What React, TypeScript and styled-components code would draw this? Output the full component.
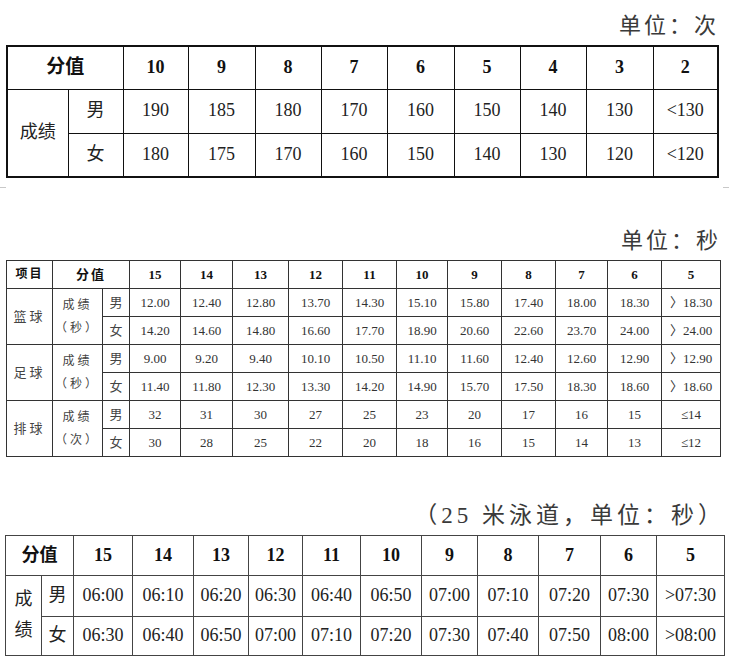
import React from 'react'
import styled, { createGlobalStyle } from 'styled-components';

const GlobalStyle = createGlobalStyle`
  html, body {
    margin: 0;
    padding: 0;
    background: #fff;
  }
  body {
    font-family: "Liberation Serif", "Noto Sans CJK SC", serif;
    color: #222;
  }
`;

// column widths measured from the scan
const jumpCols = [61, 55, 65, 67, 66, 66, 67, 66, 66, 67, 65];
const ballCols = [46, 50, 27, 51, 52, 56, 54, 54, 51, 54, 54, 52, 54, 59];
const swimCols = [36, 32, 59, 61, 55, 54, 58, 61, 56, 61, 62, 56, 68];

const jump = {
  scores: ['10', '9', '8', '7', '6', '5', '4', '3', '2'],
  male: ['190', '185', '180', '170', '160', '150', '140', '130', '<130'],
  female: ['180', '175', '170', '160', '150', '140', '130', '120', '<120'],
};

const ballScores = ['15', '14', '13', '12', '11', '10', '9', '8', '7', '6', '5'];
const balls = [
  {
    name: '篮球',
    unit: '（秒）',
    male: ['12.00', '12.40', '12.80', '13.70', '14.30', '15.10', '15.80', '17.40', '18.00', '18.30', '〉18.30'],
    female: ['14.20', '14.60', '14.80', '16.60', '17.70', '18.90', '20.60', '22.60', '23.70', '24.00', '〉24.00'],
  },
  {
    name: '足球',
    unit: '（秒）',
    male: ['9.00', '9.20', '9.40', '10.10', '10.50', '11.10', '11.60', '12.40', '12.60', '12.90', '〉12.90'],
    female: ['11.40', '11.80', '12.30', '13.30', '14.20', '14.90', '15.70', '17.50', '18.30', '18.60', '〉18.60'],
  },
  {
    name: '排球',
    unit: '（次）',
    male: ['32', '31', '30', '27', '25', '23', '20', '17', '16', '15', '≤14'],
    female: ['30', '28', '25', '22', '20', '18', '16', '15', '14', '13', '≤12'],
  },
];

const swim = {
  scores: ['15', '14', '13', '12', '11', '10', '9', '8', '7', '6', '5'],
  male: ['06:00', '06:10', '06:20', '06:30', '06:40', '06:50', '07:00', '07:10', '07:20', '07:30', '>07:30'],
  female: ['06:30', '06:40', '06:50', '07:00', '07:10', '07:20', '07:30', '07:40', '07:50', '08:00', '>08:00'],
};

const sum = (a: number[]) => a.reduce((s, v) => s + v, 0);

const App: React.FC = () => {
  return (
    <>
      <GlobalStyle />
      <Page>
        <Block $ml={6} $mt={11}>
          <Unit $spacing={3}>单位：次</Unit>
          <Table $w={sum(jumpCols)} $line="#111" $outer="2px solid #111">
            <colgroup>
              {jumpCols.map((w, i) => <Col key={i} $w={w} />)}
            </colgroup>
            <tbody>
              <Row $h={43}>
                <Head colSpan={2} $size={19}>分值</Head>
                {jump.scores.map(s => <Head key={s} $size={18}>{s}</Head>)}
              </Row>
              <Row $h={44}>
                <Label rowSpan={2} $size={18}>成绩</Label>
                <Label $size={18}>男</Label>
                {jump.male.map((v, i) => <Cell key={i} $size={18}>{v}</Cell>)}
              </Row>
              <Row $h={44}>
                <Label $size={18}>女</Label>
                {jump.female.map((v, i) => <Cell key={i} $size={18}>{v}</Cell>)}
              </Row>
            </tbody>
          </Table>
        </Block>

        <Divider>
          <Tick />
          <Tick />
        </Divider>

        <Block $ml={6} $mt={38}>
          <Unit $spacing={3}>单位：秒</Unit>
          <Table $w={sum(ballCols)} $line="#333" $outer="1px solid #555">
            <colgroup>
              {ballCols.map((w, i) => <Col key={i} $w={w} />)}
            </colgroup>
            <tbody>
              <Row $h={28}>
                <Head $size={12} $spread>项目</Head>
                <Head colSpan={2} $size={13} $spread>分值</Head>
                {ballScores.map(s => <Head key={s} $size={13}>{s}</Head>)}
              </Row>
              {balls.map(b => (
                <React.Fragment key={b.name}>
                  <Row $h={28}>
                    <Label rowSpan={2} $size={13} $spread $tone="#444">{b.name}</Label>
                    <Label rowSpan={2} $size={12} $spread $tone="#444">
                      <Stack $gap={9}>
                        <span>成绩</span>
                        <span>{b.unit}</span>
                      </Stack>
                    </Label>
                    <Label $size={13} $tone="#444">男</Label>
                    {b.male.map((v, i) => <Cell key={i} $size={13} $tone="#333">{v}</Cell>)}
                  </Row>
                  <Row $h={28}>
                    <Label $size={13} $tone="#444">女</Label>
                    {b.female.map((v, i) => <Cell key={i} $size={13} $tone="#333">{v}</Cell>)}
                  </Row>
                </React.Fragment>
              ))}
            </tbody>
          </Table>
        </Block>

        <Block $ml={5} $mt={44}>
          <Unit $spacing={4} $size={23}>（25 米泳道，单位：秒）</Unit>
          <Table $w={sum(swimCols)} $line="#444" $outer="1px solid #888">
            <colgroup>
              {swimCols.map((w, i) => <Col key={i} $w={w} />)}
            </colgroup>
            <tbody>
              <Row $h={40}>
                <Head colSpan={2} $size={18}>分值</Head>
                {swim.scores.map(s => <Head key={s} $size={18}>{s}</Head>)}
              </Row>
              <Row $h={41}>
                <Label rowSpan={2} $size={18}>
                  <Stack $gap={9}>
                    <span>成</span>
                    <span>绩</span>
                  </Stack>
                </Label>
                <Label $size={18}>男</Label>
                {swim.male.map((v, i) => <Cell key={i} $size={18}>{v}</Cell>)}
              </Row>
              <Row $h={39}>
                <Label $size={18}>女</Label>
                {swim.female.map((v, i) => <Cell key={i} $size={18}>{v}</Cell>)}
              </Row>
            </tbody>
          </Table>
        </Block>
      </Page>
    </>
  );
};

export default App

const Page = styled.main`
  width: 729px;
  min-height: 664px;
  display: flex;
  flex-direction: column;
  align-items: flex-start;
`;

const Block = styled.section<{ $ml: number; $mt: number }>`
  display: flex;
  flex-direction: column;
  gap: 4px;
  margin-left: ${p => p.$ml}px;
  margin-top: ${p => p.$mt}px;
`;

const Unit = styled.div<{ $spacing: number; $size?: number }>`
  height: 30px;
  line-height: 30px;
  text-align: right;
  font-size: ${p => p.$size ?? 22}px;
  color: #3a3a3a;
  letter-spacing: ${p => p.$spacing}px;
`;

const Divider = styled.div`
  width: 729px;
  margin-top: 9px;
  display: flex;
  justify-content: space-between;
`;

const Tick = styled.span`
  width: 6px;
  height: 1px;
  background: #c8c8c8;
`;

const Table = styled.table<{ $w: number; $line: string; $outer: string }>`
  width: ${p => p.$w}px;
  table-layout: fixed;
  border-collapse: collapse;
  border: ${p => p.$outer};

  td, th {
    border: 1px solid ${p => p.$line};
    padding: 0;
    text-align: center;
    vertical-align: middle;
    line-height: 1.2;
  }
`;

const Col = styled.col<{ $w: number }>`
  width: ${p => p.$w}px;
`;

const Row = styled.tr<{ $h: number }>`
  height: ${p => p.$h}px;
`;

const Head = styled.th<{ $size: number; $spread?: boolean }>`
  font-size: ${p => p.$size}px;
  font-weight: 700;
  color: #111;
  letter-spacing: ${p => (p.$spread ? '2px' : '0')};
`;

const Label = styled.td<{ $size: number; $spread?: boolean; $tone?: string }>`
  font-size: ${p => p.$size}px;
  color: ${p => p.$tone ?? '#222'};
  letter-spacing: ${p => (p.$spread ? '3px' : '0')};
`;

const Cell = styled.td<{ $size: number; $tone?: string }>`
  font-size: ${p => p.$size}px;
  color: ${p => p.$tone ?? '#222'};
  white-space: nowrap;
`;

const Stack = styled.div<{ $gap: number }>`
  display: flex;
  flex-direction: column;
  align-items: center;
  gap: ${p => p.$gap}px;
`;
